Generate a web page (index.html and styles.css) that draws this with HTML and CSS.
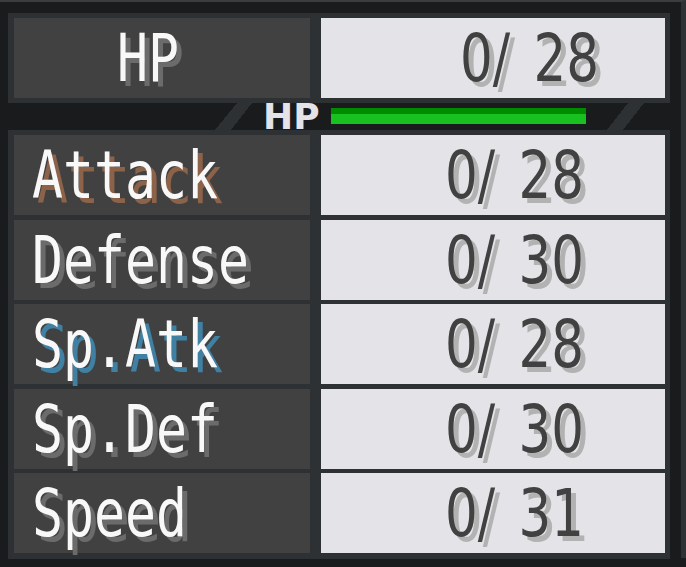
FILE: index.html
```html
<!DOCTYPE html>
<html lang="en">
<head>
    <meta charset="UTF-8">
    <meta name="viewport" content="width=device-width, initial-scale=1.0">
    <title>Stats</title>
    <link rel="stylesheet" href="styles.css">
</head>
<body>
    <div class="sheet">
        <section class="panel hp-panel">
            <div class="label label-hp"><span class="px">HP</span></div>
            <div class="value value-hp"><span class="px">0/ 28</span></div>
        </section>

        <div class="hp-row">
            <svg class="slash slash-left" width="37" height="27" viewBox="0 0 37 27">
                <polygon points="22,0 37,0 16,27 0,27" fill="#2e3134" shape-rendering="crispEdges"/>
            </svg>
            <span class="hp-tag">HP</span>
            <div class="hp-bar"><div class="hp-fill" style="width: 100%"></div></div>
            <svg class="slash slash-right" width="37" height="27" viewBox="0 0 37 27">
                <polygon points="21,0 37,0 16,27 0,27" fill="#2e3134" shape-rendering="crispEdges"/>
            </svg>
        </div>

        <section class="panel stats">
            <div class="label"><span class="px atk">Attack</span></div>
            <div class="value"><span class="px">0/ 28</span></div>

            <div class="label"><span class="px">Defense</span></div>
            <div class="value"><span class="px">0/ 30</span></div>

            <div class="label"><span class="px spa">Sp.Atk</span></div>
            <div class="value"><span class="px">0/ 28</span></div>

            <div class="label"><span class="px">Sp.Def</span></div>
            <div class="value"><span class="px">0/ 30</span></div>

            <div class="label"><span class="px">Speed</span></div>
            <div class="value"><span class="px">0/ 31</span></div>
        </section>
    </div>
</body>
</html>
```

FILE: styles.css
```css
* {
    margin: 0;
    padding: 0;
    box-sizing: border-box;
}

body {
    background-color: #1a1b1d;
    font-family: "DejaVu Sans Mono", monospace;
    width: 686px;
    height: 567px;
    overflow: hidden;
}

.sheet {
    width: 686px;
    height: 558px;
    border-top: 2px solid #3c3d3f;
    border-right: 5px solid #2f3235;
    padding: 11px 0 0 8px;
}

.panel {
    width: 662px;
    background-color: #2e3134;
    display: grid;
    grid-template-columns: 296px 344px;
    column-gap: 11px;
}

.hp-panel {
    padding: 5px 5px 5px 6px;
    grid-template-rows: 80px;
}

.stats {
    padding: 5px 5px 6px 6px;
    grid-template-rows: repeat(5, 80px);
    row-gap: 4.5px;
}

.label, .value {
    height: 80px;
    line-height: 80px;
    font-size: 66px;
    white-space: nowrap;
    padding-top: 1px;
}

.label {
    background-color: #414141;
    color: #f8f8f8;
    padding-left: 18px;
}

.label-hp {
    padding-left: 103px;
}

.value {
    background-color: #e4e3e8;
    color: #414141;
    font-family: "DejaVu Sans", sans-serif;
    padding-left: 124px;
    word-spacing: 9px;
}

.value-hp {
    padding-left: 139px;
}

.px {
    display: inline-block;
    transform: scaleX(0.78);
    transform-origin: left center;
}

.label .px {
    text-shadow: 6.4px 5px 0 #6b6b6b;
}

.label .atk {
    text-shadow: 6.4px 5px 0 #8c6249;
}

.label .spa {
    text-shadow: 6.4px 5px 0 #3f80a3;
}

.value .px {
    text-shadow: 6.4px 5px 0 #b2b2b2;
}

.hp-row {
    height: 27px;
    display: flex;
    align-items: flex-start;
    padding-left: 207px;
}

.slash {
    display: block;
    flex-shrink: 0;
}

.hp-tag {
    width: 57px;
    margin-left: 11px;
    color: #e4e3e8;
    font-family: "DejaVu Sans", sans-serif;
    font-weight: bold;
    font-size: 36px;
    line-height: 27px;
    height: 27px;
    white-space: nowrap;
}

.hp-bar {
    width: 255px;
    height: 16px;
    margin-top: 5px;
    margin-left: 11px;
}

.hp-fill {
    height: 16px;
    background-color: #19c120;
    border-top: 6px solid #008c00;
}

.slash-right {
    margin-left: 21px;
}
```
